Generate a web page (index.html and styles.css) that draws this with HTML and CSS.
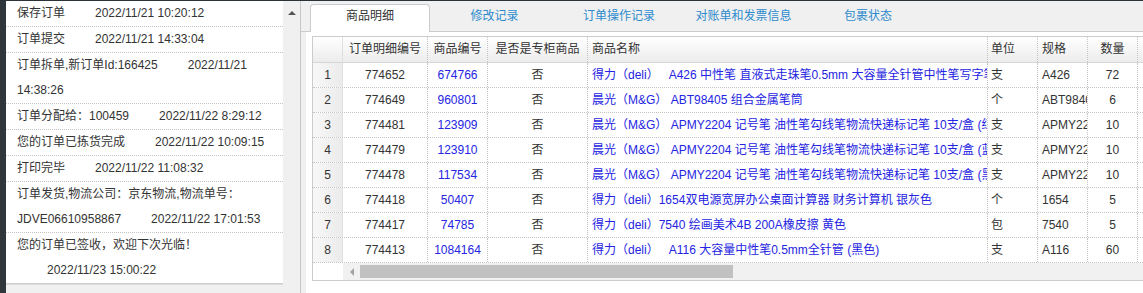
FILE: index.html
```html
<!DOCTYPE html>
<html lang="zh-CN">
<head>
    <meta charset="UTF-8">
    <meta name="viewport" content="width=device-width, initial-scale=1.0">
    <title>订单详情</title>
    <link rel="stylesheet" href="styles.css">
</head>
<body>
    <div class="page">
        <div class="nav-strip"></div>
        <div class="log-panel">
            <ul class="log-list">
                <li>保存订单<span class="log-time">2022/11/21 10:20:12</span></li>
                <li>订单提交<span class="log-time">2022/11/21 14:33:04</span></li>
                <li>订单拆单,新订单Id:166425<span class="log-time">2022/11/21 14:38:26</span></li>
                <li>订单分配给：100459<span class="log-time">2022/11/22 8:29:12</span></li>
                <li>您的订单已拣货完成<span class="log-time">2022/11/22 10:09:15</span></li>
                <li>打印完毕<span class="log-time">2022/11/22 11:08:32</span></li>
                <li>订单发货,物流公司：京东物流,物流单号：JDVE06610958867<span class="log-time">2022/11/22 17:01:53</span></li>
                <li>您的订单已签收，欢迎下次光临！<span class="log-time">2022/11/23 15:00:22</span></li>
            </ul>
            <div class="vscroll"><span class="arrow-up"></span></div>
        </div>
        <div class="detail">
            <div class="tabs">
                <div class="tab active">商品明细</div>
                <div class="tab">修改记录</div>
                <div class="tab">订单操作记录</div>
                <div class="tab">对账单和发票信息</div>
                <div class="tab">包裹状态</div>
            </div>
            <div class="tab-body">
                <div class="grid">
                    <div class="grid-row grid-head">
                        <div class="cell c-rn"></div>
                        <div class="cell c-id">订单明细编号</div>
                        <div class="cell c-code">商品编号</div>
                        <div class="cell c-flag">是否是专柜商品</div>
                        <div class="cell c-name">商品名称</div>
                        <div class="cell c-unit">单位</div>
                        <div class="cell c-spec">规格</div>
                        <div class="cell c-qty">数量</div>
                        <div class="cell c-more"></div>
                    </div>
                    <div class="grid-row">
                        <div class="cell c-rn">1</div>
                        <div class="cell c-id">774652</div>
                        <div class="cell c-code link">674766</div>
                        <div class="cell c-flag">否</div>
                        <div class="cell c-name link">得力（deli）&nbsp;&nbsp; A426 中性笔 直液式走珠笔0.5mm 大容量全针管中性笔写字笔 黑色 12支/盒</div>
                        <div class="cell c-unit">支</div>
                        <div class="cell c-spec">A426</div>
                        <div class="cell c-qty">72</div>
                        <div class="cell c-more"></div>
                    </div>
                    <div class="grid-row">
                        <div class="cell c-rn">2</div>
                        <div class="cell c-id">774649</div>
                        <div class="cell c-code link">960801</div>
                        <div class="cell c-flag">否</div>
                        <div class="cell c-name link">晨光（M&amp;G） ABT98405 组合金属笔筒</div>
                        <div class="cell c-unit">个</div>
                        <div class="cell c-spec">ABT98405</div>
                        <div class="cell c-qty">6</div>
                        <div class="cell c-more"></div>
                    </div>
                    <div class="grid-row">
                        <div class="cell c-rn">3</div>
                        <div class="cell c-id">774481</div>
                        <div class="cell c-code link">123909</div>
                        <div class="cell c-flag">否</div>
                        <div class="cell c-name link">晨光（M&amp;G） APMY2204 记号笔 油性笔勾线笔物流快递标记笔 10支/盒 (红色)</div>
                        <div class="cell c-unit">支</div>
                        <div class="cell c-spec">APMY2204</div>
                        <div class="cell c-qty">10</div>
                        <div class="cell c-more"></div>
                    </div>
                    <div class="grid-row">
                        <div class="cell c-rn">4</div>
                        <div class="cell c-id">774479</div>
                        <div class="cell c-code link">123910</div>
                        <div class="cell c-flag">否</div>
                        <div class="cell c-name link">晨光（M&amp;G） APMY2204 记号笔 油性笔勾线笔物流快递标记笔 10支/盒 (蓝色)</div>
                        <div class="cell c-unit">支</div>
                        <div class="cell c-spec">APMY2204</div>
                        <div class="cell c-qty">10</div>
                        <div class="cell c-more"></div>
                    </div>
                    <div class="grid-row">
                        <div class="cell c-rn">5</div>
                        <div class="cell c-id">774478</div>
                        <div class="cell c-code link">117534</div>
                        <div class="cell c-flag">否</div>
                        <div class="cell c-name link">晨光（M&amp;G） APMY2204 记号笔 油性笔勾线笔物流快递标记笔 10支/盒 (黑色)</div>
                        <div class="cell c-unit">支</div>
                        <div class="cell c-spec">APMY2204</div>
                        <div class="cell c-qty">10</div>
                        <div class="cell c-more"></div>
                    </div>
                    <div class="grid-row">
                        <div class="cell c-rn">6</div>
                        <div class="cell c-id">774418</div>
                        <div class="cell c-code link">50407</div>
                        <div class="cell c-flag">否</div>
                        <div class="cell c-name link">得力（deli）1654双电源宽屏办公桌面计算器 财务计算机 银灰色</div>
                        <div class="cell c-unit">个</div>
                        <div class="cell c-spec">1654</div>
                        <div class="cell c-qty">5</div>
                        <div class="cell c-more"></div>
                    </div>
                    <div class="grid-row">
                        <div class="cell c-rn">7</div>
                        <div class="cell c-id">774417</div>
                        <div class="cell c-code link">74785</div>
                        <div class="cell c-flag">否</div>
                        <div class="cell c-name link">得力（deli）7540 绘画美术4B 200A橡皮擦 黄色</div>
                        <div class="cell c-unit">包</div>
                        <div class="cell c-spec">7540</div>
                        <div class="cell c-qty">5</div>
                        <div class="cell c-more"></div>
                    </div>
                    <div class="grid-row">
                        <div class="cell c-rn">8</div>
                        <div class="cell c-id">774413</div>
                        <div class="cell c-code link">1084164</div>
                        <div class="cell c-flag">否</div>
                        <div class="cell c-name link">得力（deli）&nbsp;&nbsp; A116 大容量中性笔0.5mm全针管 (黑色)</div>
                        <div class="cell c-unit">支</div>
                        <div class="cell c-spec">A116</div>
                        <div class="cell c-qty">60</div>
                        <div class="cell c-more"></div>
                    </div>
                    <div class="hscroll">
                        <div class="hs-gap"></div>
                        <div class="hs-track">
                            <div class="hs-btn"><span class="arrow-left"></span></div>
                            <div class="hs-thumb"></div>
                        </div>
                    </div>
                </div>
            </div>
        </div>
    </div>
</body>
</html>
```

FILE: styles.css
```css
* {
    box-sizing: border-box;
}
body {
    margin: 0;
    height: 293px;
    overflow: hidden;
    font-family: "Liberation Sans", "Noto Sans CJK SC", sans-serif;
    font-size: 12px;
    color: #333;
    background-color: #f0f0f0;
    border-top: 1px solid #2b3238;
}
.page {
    display: flex;
    height: 292px;
}
.nav-strip {
    width: 6px;
    flex: none;
    background-color: #2f363c;
}
.log-panel {
    width: 294px;
    flex: none;
    display: flex;
}
.log-list {
    width: 277px;
    margin: 0;
    padding: 0;
    list-style: none;
    align-self: flex-start;
    background-color: #fff;
    border-bottom: 1px solid #dcdcdc;
}
.log-list li {
    padding-left: 11px;
    line-height: 25px;
    border-bottom: 1px dotted #c4c4c4;
}
.log-list li:last-child {
    border-bottom: 1px solid #cfcfcf;
}
.log-time {
    margin-left: 30px;
}
.vscroll {
    width: 17px;
    display: flex;
    justify-content: center;
    padding-top: 10px;
    background-color: #f0f0f0;
}
.arrow-up {
    width: 0;
    height: 0;
    border-left: 4px solid transparent;
    border-right: 4px solid transparent;
    border-bottom: 4px solid #555;
}
.detail {
    flex: 1;
    min-width: 0;
    display: flex;
    flex-direction: column;
    border-left: 1px solid #c8c8c8;
}
.tabs {
    display: flex;
    align-items: flex-start;
    gap: 4.5px;
    height: 31px;
    padding: 3px 0 0 9px;
    background-color: #f0f0f0;
    border-bottom: 1px solid #ccc;
}
.tab {
    flex: none;
    width: 120px;
    height: 28px;
    padding-top: 1px;
    line-height: 22px;
    text-align: center;
    color: #2d8bcd;
}
.tab.active {
    padding-top: 0;
    color: #333;
    background-color: #fff;
    border: 1px solid #ccc;
    border-bottom: none;
    border-radius: 4px 4px 0 0;
}
.tab-body {
    flex: 1;
    margin-left: 5px;
    padding: 4px 0 0 6px;
    background-color: #fff;
    overflow: hidden;
}
.grid {
    width: 900px;
    border: 1px solid #ccc;
}
.grid-row {
    display: flex;
    height: 25px;
    line-height: 24px;
    border-bottom: 1px dotted #c4c4c4;
}
.grid-head {
    height: 26px;
    line-height: 25px;
    background: linear-gradient(#fff, #ececec);
    border-bottom: 1px solid #d6d6d6;
}
.cell {
    flex: none;
    padding: 0 3px;
    white-space: nowrap;
    overflow: hidden;
    border-right: 1px dotted #c4c4c4;
}
.c-rn {
    width: 30px;
    text-align: center;
    background: linear-gradient(to right, #f8f8f8, #ebebeb);
    border-right: 1px solid #e0e0e0;
}
.grid-head .c-rn {
    background: none;
}
.c-id {
    width: 85px;
    text-align: center;
}
.c-code {
    width: 60px;
    text-align: center;
}
.c-flag {
    width: 100px;
    text-align: center;
}
.c-name {
    width: 400px;
    padding-left: 4px;
    padding-right: 0;
}
.c-unit {
    width: 50px;
    padding-left: 3px;
}
.c-spec {
    width: 50px;
    padding-left: 4px;
    padding-right: 0;
}
.c-qty {
    width: 50px;
    text-align: center;
}
.c-more {
    width: 75px;
}
.link {
    color: #2424e2;
}
.hscroll {
    display: flex;
    height: 17px;
}
.hs-gap {
    width: 30px;
    background-color: #fff;
}
.hs-track {
    flex: 1;
    display: flex;
    align-items: flex-start;
    background-color: #f1f1f1;
}
.hs-btn {
    width: 17px;
    height: 17px;
    display: flex;
    align-items: center;
    justify-content: center;
}
.arrow-left {
    width: 0;
    height: 0;
    border-top: 4px solid transparent;
    border-bottom: 4px solid transparent;
    border-right: 4px solid #a3a3a3;
}
.hs-thumb {
    width: 373px;
    height: 13px;
    margin-top: 2px;
    background-color: #c1c1c1;
}
```
